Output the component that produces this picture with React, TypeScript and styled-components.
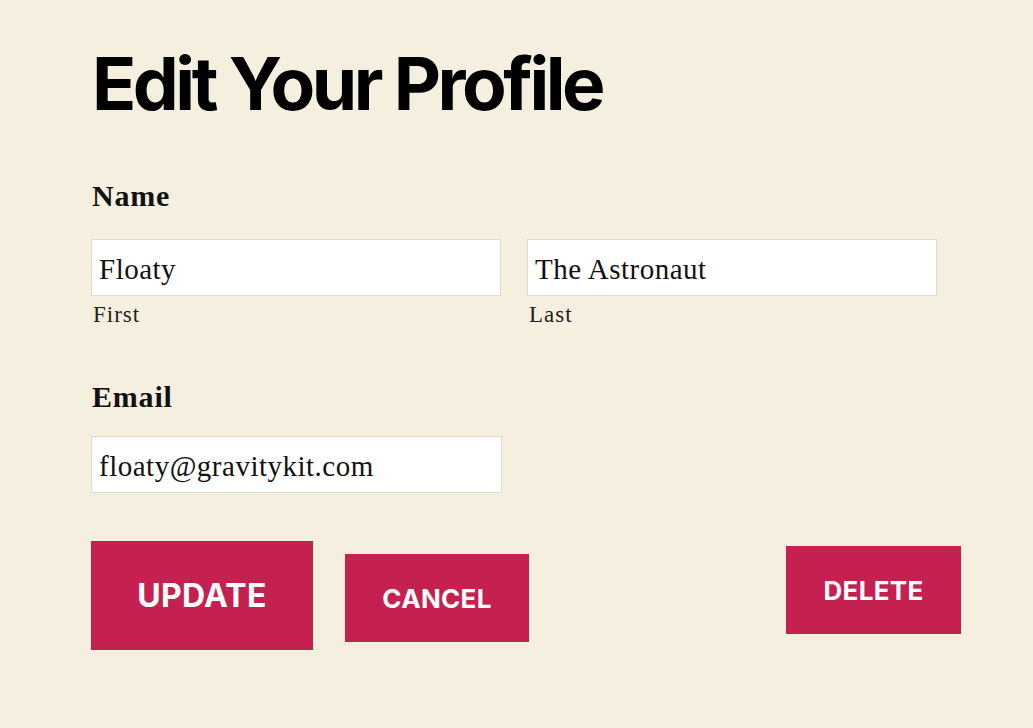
import React from 'react';
import styled, { createGlobalStyle } from 'styled-components';

const GlobalStyle = createGlobalStyle`
  html, body {
    margin: 0;
    padding: 0;
    background: #f5efe0;
  }
  body {
    font-family: "Liberation Serif", "DejaVu Serif", serif;
    color: #111;
  }
`;

const App = () => (
  <Page>
    <GlobalStyle />
    <Title>Edit Your Profile</Title>
    <Field $top={52}>
      <FieldLabel>Name</FieldLabel>
      <NameRow>
        <SubField>
          <Input type="text" defaultValue="Floaty" />
          <SubLabel>First</SubLabel>
        </SubField>
        <SubField>
          <Input type="text" defaultValue="The Astronaut" />
          <SubLabel>Last</SubLabel>
        </SubField>
      </NameRow>
    </Field>
    <Field $top={53}>
      <FieldLabel>Email</FieldLabel>
      <EmailBox>
        <Input type="email" defaultValue="floaty@gravitykit.com" />
      </EmailBox>
    </Field>
    <Actions>
      <Group>
        <Button $w={222} $h={109} $size={32} $offset={0}>Update</Button>
        <Button $w={184} $h={88} $size={26} $offset={13}>Cancel</Button>
      </Group>
      <Button $w={175} $h={88} $size={26} $offset={5}>Delete</Button>
    </Actions>
  </Page>
);

export default App;

const Page = styled.div`
  width: 870px;
  padding: 40px 0 60px 91px;
`;

const Title = styled.h1`
  margin: 0 0 0 1px;
  font-family: Inter, "Liberation Sans", sans-serif;
  font-weight: 700;
  font-size: 73px;
  line-height: 88px;
  letter-spacing: -3.5px;
  color: #000;
`;

const Field = styled.div<{ $top: number }>`
  margin-top: ${(p) => p.$top}px;
`;

const FieldLabel = styled.div`
  margin-left: 1px;
  font-weight: 700;
  font-size: 30px;
  line-height: 32px;
  letter-spacing: 0.8px;
  color: #111;
`;

const NameRow = styled.div`
  display: grid;
  grid-template-columns: 410px 410px;
  column-gap: 26px;
  margin-top: 27px;
`;

const SubField = styled.div`
  display: flex;
  flex-direction: column;
`;

const Input = styled.input`
  box-sizing: border-box;
  width: 100%;
  height: 57px;
  padding: 4px 7px 0;
  border: 1px solid #dcdad3;
  border-radius: 0;
  background: #fff;
  font-family: "Liberation Serif", "DejaVu Serif", serif;
  font-size: 29px;
  letter-spacing: 0.5px;
  color: #111;
  outline: none;
`;

const SubLabel = styled.span`
  margin: 6px 0 0 2px;
  font-size: 23px;
  line-height: 26px;
  color: #222;
  letter-spacing: 1px;
`;

const EmailBox = styled.div`
  width: 411px;
  margin-top: 23px;
`;

const Actions = styled.div`
  display: flex;
  justify-content: space-between;
  align-items: flex-start;
  margin-top: 48px;
`;

const Group = styled.div`
  display: flex;
  align-items: flex-start;
  gap: 32px;
`;

const Button = styled.button<{ $w: number; $h: number; $size: number; $offset: number }>`
  width: ${(p) => p.$w}px;
  height: ${(p) => p.$h}px;
  margin-top: ${(p) => p.$offset}px;
  border: none;
  border-radius: 0;
  background: #c42150;
  color: #fff;
  font-family: Inter, "Liberation Sans", sans-serif;
  font-weight: 700;
  font-size: ${(p) => p.$size}px;
  text-transform: uppercase;
  letter-spacing: 0.3px;
  cursor: pointer;
`;
